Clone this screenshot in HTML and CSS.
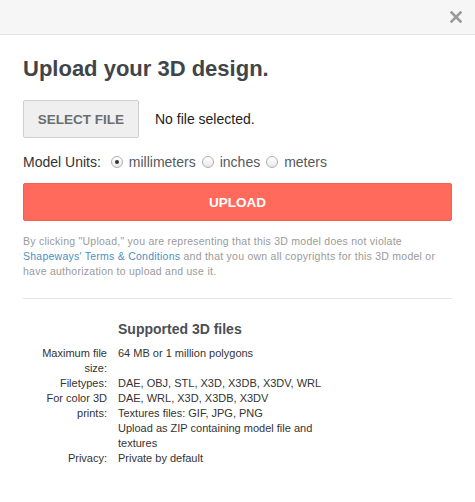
FILE: index.html
```html
<!DOCTYPE html>
<html>
<head>
<meta charset="utf-8">
<link rel="stylesheet" href="styles.css">
</head>
<body>
<div class="modal">
  <div class="modal-header">
    <svg class="close" width="12" height="12" viewBox="0 0 12 12"><path d="M1.5 1.5 L10.5 10.5 M10.5 1.5 L1.5 10.5" stroke="#9a9a9a" stroke-width="2.6" stroke-linecap="square"/></svg>
  </div>
  <div class="modal-body">
    <h1 class="title">Upload your 3D design.</h1>
    <div class="file-row">
      <button class="btn-select">SELECT FILE</button>
      <span class="file-status">No file selected.</span>
    </div>
    <div class="units">
      <span class="units-label">Model Units:</span>
      <span class="radio checked"></span><span class="opt">millimeters</span>
      <span class="radio"></span><span class="opt">inches</span>
      <span class="radio"></span><span class="opt">meters</span>
    </div>
    <button class="btn-upload">UPLOAD</button>
    <p class="disclaimer">By clicking "Upload," you are representing that this 3D model does not violate <a class="link">Shapeways' Terms &amp; Conditions</a> and that you own all copyrights for this 3D model or have authorization to upload and use it.</p>
    <hr class="divider">
    <div class="supported">
      <div></div><h2 class="sup-title">Supported 3D files</h2>
      <div class="lbl">Maximum file size:</div><div class="val">64 MB or 1 million polygons</div>
      <div class="lbl">Filetypes:</div><div class="val">DAE, OBJ, STL, X3D, X3DB, X3DV, WRL</div>
      <div class="lbl">For color 3D prints:</div><div class="val">DAE, WRL, X3D, X3DB, X3DV<br>Textures files: GIF, JPG, PNG<br>Upload as ZIP containing model file and textures</div>
      <div class="lbl">Privacy:</div><div class="val">Private by default</div>
    </div>
  </div>
</div>
</body>
</html>
```
FILE: styles.css
```css
html, body {
  margin: 0;
  padding: 0;
  background: #fff;
  font-family: "Liberation Sans", Arial, Helvetica, sans-serif;
  color: #333;
}
.modal {
  width: 475px;
}
.modal-header {
  height: 34px;
  background: #f6f6f6;
  border-bottom: 1px solid #e4e4e4;
  display: flex;
  justify-content: flex-end;
  align-items: center;
  padding-right: 13px;
}
.close {
  display: block;
}
.modal-body {
  padding: 0 23px;
}
.title {
  margin: 21px 0 0;
  font-size: 22px;
  line-height: 26px;
  font-weight: bold;
  color: #3f4549;
}
.file-row {
  display: flex;
  align-items: center;
  margin-top: 18px;
}
.btn-select {
  width: 116px;
  height: 38px;
  background: #efefef;
  border: 1px solid #cfcfcf;
  border-radius: 2px;
  font-family: inherit;
  font-size: 13.5px;
  font-weight: bold;
  color: #6a6e71;
  letter-spacing: 0;
  padding: 0;
}
.file-status {
  margin-left: 16px;
  font-size: 14px;
  color: #222;
}
.units {
  display: flex;
  align-items: center;
  margin-top: 15px;
  height: 18px;
  font-size: 14px;
  color: #333;
}
.units-label {
  margin-right: 10px;
}
.radio {
  width: 10px;
  height: 10px;
  border: 1px solid #b0b0b0;
  border-radius: 50%;
  background: linear-gradient(#fff, #e9e9e9);
  position: relative;
  margin-right: 6px;
  box-sizing: content-box;
}
.radio.checked::after {
  content: "";
  position: absolute;
  left: 3px;
  top: 3px;
  width: 4px;
  height: 4px;
  border-radius: 50%;
  background: #333;
}
.opt {
  margin-right: 6px;
  color: #555a5e;
}
.opt + .radio {
  margin-left: 0;
}
.btn-upload {
  display: block;
  width: 429px;
  height: 38px;
  margin-top: 12px;
  background: #ff6a5c;
  border: 1px solid #f06152;
  border-radius: 2px;
  color: #fff;
  font-family: inherit;
  font-weight: bold;
  font-size: 13.5px;
  letter-spacing: 0;
  padding: 0;
}
.disclaimer {
  margin: 13px 0 0;
  font-size: 10.5px;
  line-height: 15px;
  letter-spacing: 0.25px;
  color: #9a9a9a;
}
.link {
  color: #4b8fc3;
}
.divider {
  margin: 19px 0 0;
  border: 0;
  border-top: 1px solid #e6e6e6;
}
.supported {
  display: grid;
  grid-template-columns: 84px 210px;
  column-gap: 11px;
  font-size: 11px;
  line-height: 15px;
  color: #333;
  margin-top: 22px;
}
.sup-title {
  margin: 0 0 8px;
  font-size: 14px;
  line-height: 17px;
  font-weight: bold;
  color: #4a4f53;
}
.lbl {
  text-align: right;
}
```
